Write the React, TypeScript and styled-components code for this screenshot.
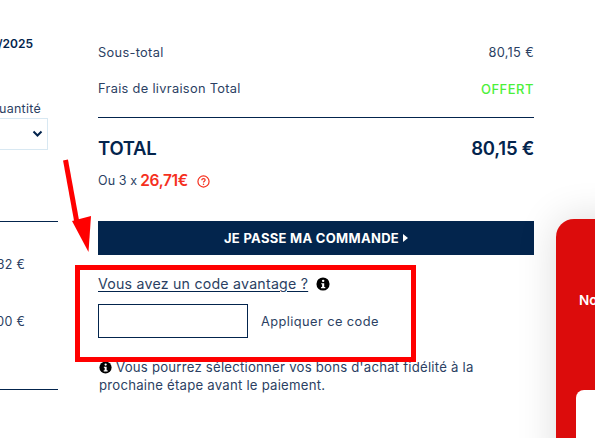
import React from "react";
import styled, { createGlobalStyle } from "styled-components";

const navy = "#03244d";
const text = "#2b3f63";
const font = `Inter, "Noto Sans", sans-serif`;

const Global = createGlobalStyle`
  html, body { margin: 0; padding: 0; background: #fff; }
  body { width: 595px; height: 438px; overflow: hidden; font-family: ${font}; }
`;

const Page = styled.div`
  position: relative;
  width: 595px;
  height: 438px;
  overflow: hidden;
  display: grid;
  grid-template-columns: 58px 436px 61px;
`;

const LeftColumn = styled.aside`
  display: flex;
  flex-direction: column;
  align-items: stretch;
  padding-top: 36px;
  width: 58px;
`;

const DateText = styled.div`
  font-size: 12px;
  font-weight: 600;
  line-height: 15px;
  color: ${navy};
  white-space: nowrap;
  display: flex;
  justify-content: flex-end;
  padding-right: 25px;
`;

const QtyLabel = styled.div`
  margin-top: 50px;
  font-size: 12.5px;
  line-height: 16px;
  letter-spacing: 0.25px;
  color: ${text};
  white-space: nowrap;
  display: flex;
  justify-content: flex-end;
  padding-right: 17px;
`;

const QtySelect = styled.div`
  margin-top: 1px;
  width: 48px;
  height: 32px;
  box-sizing: border-box;
  border: 1px solid #d8e8f2;
  border-left: none;
  display: flex;
  align-items: center;
  justify-content: flex-end;
  padding-right: 4px;
`;

const LeftRule = styled.div<{ $top: number }>`
  margin-top: ${(p) => p.$top}px;
  height: 1px;
  background: ${navy};
`;

const LeftPrice = styled.div<{ $top: number }>`
  margin-top: ${(p) => p.$top}px;
  font-size: 12.5px;
  line-height: 16px;
  letter-spacing: 0.25px;
  color: ${text};
  white-space: nowrap;
  display: flex;
  justify-content: flex-end;
  padding-right: 33px;
`;

const Main = styled.main`
  margin-left: 40px;
  width: 436px;
  padding-top: 45px;
  display: flex;
  flex-direction: column;
`;

const Row = styled.div<{ $top?: number }>`
  display: flex;
  justify-content: space-between;
  align-items: center;
  margin-top: ${(p) => p.$top ?? 0}px;
  font-size: 12.8px;
  line-height: 16px;
  letter-spacing: 0.32px;
  color: ${text};
`;

const Offer = styled.span`
  color: #4cf03a;
  font-weight: 500;
  font-size: 13px;
  letter-spacing: 0.5px;
`;

const Rule = styled.div`
  margin-top: 20px;
  height: 1px;
  background: ${navy};
`;

const TotalRow = styled.div`
  margin-top: 19px;
  display: flex;
  justify-content: space-between;
  align-items: center;
  font-size: 18.5px;
  line-height: 22px;
  font-weight: 600;
  color: ${navy};
  letter-spacing: -0.25px;
`;

const Instalment = styled.div`
  margin-top: 12px;
  display: flex;
  align-items: center;
  font-size: 12.5px;
  line-height: 20px;
  letter-spacing: 0.1px;
  color: ${text};
`;

const InstalmentAmount = styled.strong`
  margin-left: 3px;
  font-size: 15.5px;
  font-weight: 600;
  color: #f5301e;
  letter-spacing: -0.3px;
`;

const HelpIcon = styled.svg`
  margin-left: 9px;
  width: 13px;
  height: 13px;
`;

const CheckoutButton = styled.button`
  margin-top: 30px;
  height: 34px;
  border: none;
  padding: 0;
  background: #03254d;
  color: #fff;
  font-family: ${font};
  font-size: 13px;
  font-weight: 700;
  letter-spacing: 0.3px;
  display: flex;
  align-items: center;
  justify-content: center;
  gap: 4px;
`;

const CodeTitleRow = styled.div`
  margin-top: 18px;
  display: flex;
  align-items: center;
  gap: 8px;
  font-size: 14.2px;
  line-height: 22px;
  letter-spacing: 0.22px;
  color: ${text};
`;

const CodeLink = styled.a`
  color: ${text};
  text-decoration: underline;
  text-underline-offset: 2px;
  text-decoration-thickness: 1px;
  text-decoration-color: ${navy};
`;

const CodeForm = styled.div`
  margin-top: 9px;
  display: flex;
  align-items: center;
  gap: 13px;
`;

const CodeInput = styled.input`
  width: 150px;
  height: 34px;
  box-sizing: border-box;
  border: 1px solid ${navy};
  background: #fff;
  padding: 0;
`;

const ApplyLabel = styled.span`
  font-size: 12.8px;
  letter-spacing: 0.42px;
  color: ${text};
`;

const Note = styled.p`
  margin: 20px 0 0 1px;
  width: 385px;
  font-size: 13.2px;
  line-height: 18px;
  letter-spacing: 0.22px;
  color: ${text};
`;

const InfoGlyph = styled.svg`
  width: 14px;
  height: 14px;
  flex: none;
`;

const InlineInfo = styled(InfoGlyph)`
  width: 13px;
  height: 13px;
  vertical-align: -2px;
  margin-right: 4px;
`;

const PromoCard = styled.aside`
  position: absolute;
  left: 556px;
  top: 219px;
  width: 80px;
  height: 260px;
  background: #dc0c0c;
  border-radius: 18px;
  box-shadow: 0 0 40px rgba(0, 0, 0, 0.14);
  color: #fff;
`;

const PromoTitle = styled.div`
  position: absolute;
  left: 23px;
  top: 72px;
  font-size: 13.5px;
  font-weight: 600;
  line-height: 18px;
`;

const PromoInner = styled.div`
  position: absolute;
  left: 20px;
  top: 171px;
  width: 60px;
  height: 100px;
  background: #fff;
  border-radius: 8px;
`;

const Highlight = styled.div`
  position: absolute;
  left: 75px;
  top: 265px;
  width: 341px;
  height: 97px;
  box-sizing: border-box;
  border: 5px solid #ff0000;
`;

const Arrow = styled.svg`
  position: absolute;
  left: 60px;
  top: 155px;
  width: 40px;
  height: 100px;
`;

const Info = () => (
  <>
    <circle cx="8" cy="8" r="7.5" fill="#000" />
    <circle cx="8.2" cy="4.4" r="1.4" fill="#fff" />
    <path d="M6 7h3.4v4.4H10.6v1.4H5.8v-1.4H7V8.4H6z" fill="#fff" />
  </>
);

export default function App() {
  return (
    <Page>
      <Global />
      <LeftColumn>
        <DateText>12/2025</DateText>
        <QtyLabel>Quantité</QtyLabel>
        <QtySelect>
          <svg width="11" height="8" viewBox="0 0 11 8">
            <path d="M1.5 1.5 5.5 5.5 9.5 1.5" fill="none" stroke={navy} strokeWidth="2" />
          </svg>
        </QtySelect>
        <LeftRule $top={71} />
        <LeftPrice $top={35}>26,32 €</LeftPrice>
        <LeftPrice $top={41}>10,00 €</LeftPrice>
        <LeftRule $top={59} />
      </LeftColumn>
      <Main>
        <Row>
          <span>Sous-total</span>
          <span>80,15 €</span>
        </Row>
        <Row $top={20}>
          <span>Frais de livraison Total</span>
          <Offer>OFFERT</Offer>
        </Row>
        <Rule />
        <TotalRow>
          <span>TOTAL</span>
          <span>80,15 €</span>
        </TotalRow>
        <Instalment>
          Ou 3 x
          <InstalmentAmount>26,71€</InstalmentAmount>
          <HelpIcon viewBox="0 0 14 14">
            <circle cx="7" cy="7" r="6" fill="none" stroke="#f5301e" strokeWidth="1.3" />
            <path d="M5.2 5.6C5.2 4.5 6 4 7 4s1.8.6 1.8 1.5C8.8 6.8 7 6.8 7 8.2" fill="none" stroke="#f5301e" strokeWidth="1.3" />
            <circle cx="7" cy="10" r=".8" fill="#f5301e" />
          </HelpIcon>
        </Instalment>
        <CheckoutButton>
          JE PASSE MA COMMANDE
          <svg width="5" height="8" viewBox="0 0 5 8">
            <path d="M0 0 5 4 0 8z" fill="#fff" />
          </svg>
        </CheckoutButton>
        <CodeTitleRow>
          <CodeLink>Vous avez un code avantage ? </CodeLink>
          <InfoGlyph viewBox="0 0 16 16"><Info /></InfoGlyph>
        </CodeTitleRow>
        <CodeForm>
          <CodeInput aria-label="Code avantage" />
          <ApplyLabel>Appliquer ce code</ApplyLabel>
        </CodeForm>
        <Note>
          <InlineInfo viewBox="0 0 16 16"><Info /></InlineInfo>
          Vous pourrez sélectionner vos bons d'achat fidélité à la prochaine étape avant le paiement.
        </Note>
      </Main>
      <PromoCard>
        <PromoTitle>No</PromoTitle>
        <PromoInner />
      </PromoCard>
      <Highlight />
      <Arrow viewBox="0 0 40 100">
        <path d="M5.5 5 17 68" stroke="#ff0000" strokeWidth="5" fill="none" />
        <path d="M12 66 31 61 28.5 97z" fill="#ff0000" />
      </Arrow>
    </Page>
  );
}
